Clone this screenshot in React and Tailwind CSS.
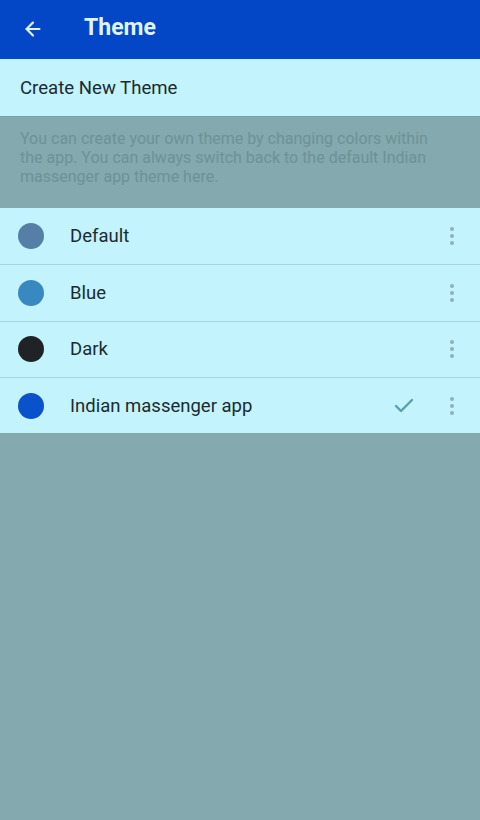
import { ArrowLeft, Check } from "lucide-react";

const themes = [
  { name: "Default", color: "bg-[#557fa6]" },
  { name: "Blue", color: "bg-[#3a88c0]" },
  { name: "Dark", color: "bg-[#1f2326]" },
  { name: "Indian massenger app", color: "bg-[#0a52cc]", selected: true },
];

const Kebab = () => (
  <div className="flex flex-col items-center gap-[3px]">
    <span className="h-[4px] w-[4px] rounded-full bg-[#8db3b9]" />
    <span className="h-[4px] w-[4px] rounded-full bg-[#8db3b9]" />
    <span className="h-[4px] w-[4px] rounded-full bg-[#8db3b9]" />
  </div>
);

export default function App() {
  return (
    <div className="flex min-h-[820px] w-[480px] flex-col bg-[#84a9ae] font-['Roboto',sans-serif]">
      {/* Toolbar */}
      <div className="flex h-[59px] items-center bg-[#0347c6] px-[22px] pb-[2px]">
        <ArrowLeft className="h-[22px] w-[22px] text-[#dff4ff]" strokeWidth={2.4} />
        <h1 className="ml-[40px] text-[23px] font-bold text-[#dff4ff]">Theme</h1>
      </div>

      {/* Create new theme */}
      <div className="flex h-[57px] items-center bg-[#c3f3fc] px-[20px] pt-[3px] text-[18.6px] text-[#1b2b31]">
        Create New Theme
      </div>

      {/* Description */}
      <div className="h-[92px] border-t border-[#78a0a6] pl-[20px] pr-[40px] pt-[12px] text-[16px] leading-[19px] text-[#6c9398]">
        You can create your own theme by changing colors within the app. You can always
        switch back to the default Indian massenger app theme here.
      </div>

      {/* Theme list */}
      <div className="bg-[#c3f3fc]">
        {themes.map((t, i) => (
          <div
            key={t.name}
            className={`flex h-[56.3px] items-center pl-[18px] pr-[26px] ${
              i > 0 ? "border-t border-[#a3d6df]" : ""
            }`}
          >
            <span className={`h-[26px] w-[26px] rounded-full ${t.color}`} />
            <span className="ml-[26px] flex-1 pt-[2px] text-[18.5px] text-[#1b2b31]">{t.name}</span>
            {t.selected && (
              <Check className="mr-[34px] h-[24px] w-[24px] text-[#5a9fb0]" strokeWidth={2.4} />
            )}
            <Kebab />
          </div>
        ))}
      </div>
    </div>
  );
}
